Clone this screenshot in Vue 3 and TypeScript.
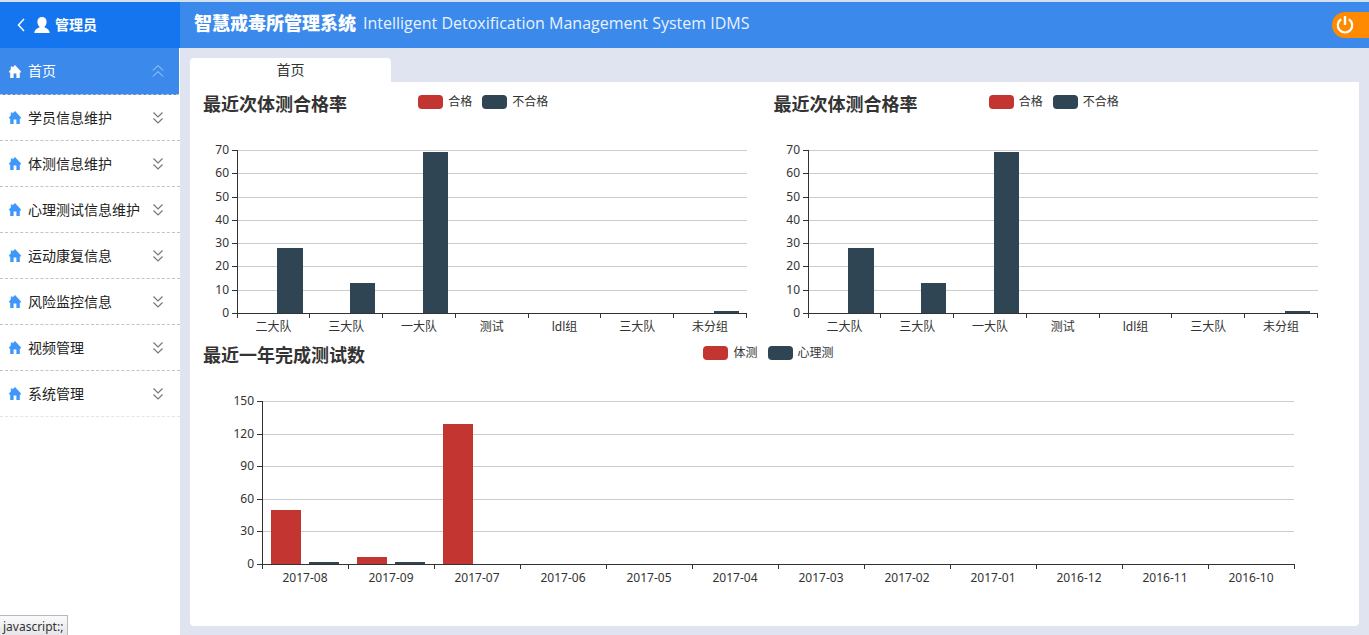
<script setup lang="ts">
import { ref } from 'vue'

interface Series { name: string; color: string; values: number[] }
interface Chart {
  id: string
  title: string
  wide: boolean
  max: number
  step: number
  categories: string[]
  series: Series[]
}

const RED = '#c23531'
const NAVY = '#2f4554'
const PLOT_HEIGHT = 163

const menu: string[] = [
  '首页', '学员信息维护', '体测信息维护', '心理测试信息维护',
  '运动康复信息', '风险监控信息', '视频管理', '系统管理',
]
const active = ref(0)

const teams = ['二大队', '三大队', '一大队', '测试', 'ldl组', '三大队', '未分组']
const passRate = (id: string): Chart => ({
  id,
  title: '最近次体测合格率',
  wide: false,
  max: 70,
  step: 10,
  categories: teams,
  series: [
    { name: '合格', color: RED, values: [0, 0, 0, 0, 0, 0, 0] },
    { name: '不合格', color: NAVY, values: [28, 13, 69, 0, 0, 0, 1] },
  ],
})

const charts: Chart[] = [
  passRate('rate-a'),
  passRate('rate-b'),
  {
    id: 'year',
    title: '最近一年完成测试数',
    wide: true,
    max: 150,
    step: 30,
    categories: [
      '2017-08', '2017-09', '2017-07', '2017-06', '2017-05', '2017-04',
      '2017-03', '2017-02', '2017-01', '2016-12', '2016-11', '2016-10',
    ],
    series: [
      { name: '体测', color: RED, values: [50, 6, 129, 0, 0, 0, 0, 0, 0, 0, 0, 0] },
      { name: '心理测', color: NAVY, values: [2, 2, 0, 0, 0, 0, 0, 0, 0, 0, 0, 0] },
    ],
  },
]

const ticks = (c: Chart): number[] =>
  Array.from({ length: c.max / c.step + 1 }, (_, i) => i * c.step)

const yOf = (c: Chart, v: number): number => Math.round(PLOT_HEIGHT * (1 - v / c.max))

// Two bars share 80% of a category, separated by 30% of a bar's width.
const bars = (c: Chart) => {
  const slot = 100 / c.categories.length
  const width = (slot * 0.8) / 2.3
  return c.series.flatMap((s, k) =>
    s.values
      .map((v, i) => ({
        key: `${k}-${i}`,
        x: `${slot * (i + 0.1) + k * width * 1.3}%`,
        width: `${width}%`,
        y: yOf(c, v),
        height: PLOT_HEIGHT - yOf(c, v),
        color: s.color,
      }))
      .filter((b) => b.height > 0),
  )
}
</script>

<template>
  <div class="app">
    <aside class="sidebar">
      <div class="account">
        <button class="back" type="button" aria-label="返回">
          <svg width="8" height="14" viewBox="0 0 8 14"><path d="M7 1L1.5 7L7 13" fill="none" stroke="#fff" stroke-width="1.5" /></svg>
        </button>
        <svg class="user" width="16" height="16" viewBox="0 0 16 16">
          <path fill="#fff" d="M8 0C5.2 0 3.4 1.9 3.4 4.8C3.4 6.8 4.2 8.6 5.4 9.6V10.6C3 11.4 .6 12.6 .3 16H15.7C15.4 12.6 13 11.4 10.6 10.6V9.6C11.8 8.6 12.6 6.8 12.6 4.8C12.6 1.9 10.8 0 8 0Z" />
        </svg>
        <strong>管理员</strong>
      </div>
      <nav>
        <a
          v-for="(item, i) in menu"
          :key="item"
          href="#"
          class="item"
          :class="{ active: i === active }"
          @click.prevent="active = i"
        >
          <svg class="home" width="12" height="13" viewBox="0 0 12 13">
            <path fill="currentColor" d="M6 0L12 6.6V7.4H10.8V13H7.4V8.6H4.6V13H1.2V7.4H0V6.6L1.8 4.6V1.6H3.6V2.6Z" />
          </svg>
          <span class="label">{{ item }}</span>
          <svg class="arrows" width="12" height="14" viewBox="0 0 12 14">
            <path v-if="i === active" d="M1 6.5L6 1.5L11 6.5M1 12.5L6 7.5L11 12.5" fill="none" stroke="currentColor" />
            <path v-else d="M1.5 1.5L6 6L10.5 1.5M1.5 7.5L6 12L10.5 7.5" fill="none" stroke="currentColor" stroke-width="1.2" />
          </svg>
        </a>
      </nav>
    </aside>

    <div class="content">
      <header class="topbar">
        <h1>智慧戒毒所管理系统</h1>
        <span class="english">Intelligent Detoxification Management System IDMS</span>
        <button class="power" type="button" aria-label="退出">
          <svg width="18" height="20" viewBox="0 0 18 20">
            <path d="M5.2 4.2A7.2 7.2 0 1 0 12.8 4.2" fill="none" stroke="#fff" stroke-width="2.2" />
            <path d="M9 1V10" stroke="#fff" stroke-width="2.4" />
          </svg>
        </button>
      </header>

      <main>
        <div class="tabs"><button type="button" class="tab">首页</button></div>
        <div class="panel">
          <section v-for="c in charts" :key="c.id" class="chart" :class="{ wide: c.wide }">
            <div class="heading">
              <h2>{{ c.title }}</h2>
              <ul class="legend">
                <li v-for="s in c.series" :key="s.name">
                  <span class="swatch" :style="{ background: s.color }"></span>
                  <span class="name">{{ s.name }}</span>
                </li>
              </ul>
            </div>
            <svg class="plot" :height="PLOT_HEIGHT" width="100%" role="img" :aria-label="c.title">
              <g v-for="t in ticks(c)" :key="t">
                <rect v-if="t > 0" x="0" :y="yOf(c, t)" width="100%" height="1" fill="#ccc" />
                <rect x="-5" :y="yOf(c, t)" width="5" height="1" fill="#333" />
                <text x="-8" :y="yOf(c, t) + 4" text-anchor="end">{{ t }}</text>
              </g>
              <rect v-for="b in bars(c)" :key="b.key" :x="b.x" :y="b.y" :width="b.width" :height="b.height" :fill="b.color" />
              <rect x="0" y="0" width="1" :height="PLOT_HEIGHT" fill="#333" />
              <rect x="0" :y="PLOT_HEIGHT" width="100%" height="1" fill="#333" />
              <line
                v-for="n in c.categories.length + 1"
                :key="'tick' + n"
                :x1="`${((n - 1) / c.categories.length) * 100}%`"
                :x2="`${((n - 1) / c.categories.length) * 100}%`"
                :y1="PLOT_HEIGHT"
                :y2="PLOT_HEIGHT + 5"
                stroke="#333"
              />
              <text
                v-for="(name, i) in c.categories"
                :key="'cat' + i"
                :x="`${((i + 0.5) / c.categories.length) * 100}%`"
                :y="PLOT_HEIGHT + 18"
                text-anchor="middle"
              >{{ name }}</text>
            </svg>
          </section>
        </div>
      </main>
    </div>

    <div class="status">javascript:;</div>
  </div>
</template>

<style>
body {
  margin: 0;
}
</style>

<style scoped>
.app {
  display: flex;
  box-sizing: border-box;
  min-height: 100vh;
  border-top: 2px solid #d3e0f0;
  background: #e0e4f0;
  color: #333;
  font-family: "Noto Sans", "Noto Sans CJK SC", sans-serif;
  font-size: 14px;
}
button {
  border: 0;
  padding: 0;
  background: none;
  color: inherit;
  font: inherit;
  cursor: pointer;
}
svg {
  display: block;
}
.sidebar {
  flex: 0 0 180px;
  background: #fff;
}
.account {
  display: flex;
  align-items: center;
  height: 46px;
  padding-left: 17px;
  background: #1475ee;
  color: #fff;
  line-height: 20px;
}
.user {
  margin: 0 5px 0 9px;
}
.item {
  display: flex;
  align-items: center;
  box-sizing: border-box;
  height: 46px;
  padding: 0 16px 0 9px;
  border-bottom: 1px dashed #c4c4c4;
  color: #222;
  line-height: 20px;
  text-decoration: none;
}
.item:last-child {
  border-bottom-color: #e4e4e4;
}
.home {
  margin-right: 7px;
  color: #3f97fb;
}
.label {
  flex: 1;
  white-space: nowrap;
}
.arrows {
  color: #777;
}
.item.active {
  height: 47px;
  margin-right: 1px;
  padding-right: 15px;
  background: #3b89ea;
  color: #fff;
}
.item.active .home {
  color: #fff;
}
.item.active .arrows {
  color: #b5d4fa;
}
.content {
  display: flex;
  flex: 1;
  flex-direction: column;
  min-width: 0;
}
.topbar {
  display: flex;
  align-items: center;
  height: 46px;
  padding-left: 14px;
  background: #3b89ea;
  color: #fff;
}
h1 {
  margin: 0 7px 4px 0;
  font-size: 18px;
  font-weight: 900;
  line-height: 24px;
  white-space: nowrap;
}
.english {
  margin-bottom: 4px;
  color: #e8f2ff;
  font-family: "Open Sans", "Noto Sans", sans-serif;
  font-size: 16px;
  line-height: 24px;
  white-space: nowrap;
}
.power {
  display: flex;
  align-items: center;
  width: 37px;
  height: 26px;
  margin-left: auto;
  padding-left: 4px;
  border-radius: 13px 0 0 13px;
  background: #ff8a00;
}
main {
  display: flex;
  flex: 1;
  flex-direction: column;
  padding: 10px 10px 9px;
}
.tab {
  width: 201px;
  height: 24px;
  border-radius: 4px 4px 0 0;
  background: #fff;
  line-height: 24px;
}
.panel {
  display: grid;
  flex: 1;
  grid-template-columns: 1fr 1fr;
  align-content: start;
  padding: 8px 20px 8px 8px;
  border-radius: 0 0 4px 4px;
  background: #fff;
}
.chart {
  padding: 0 22px 28px 39px;
}
.chart.wide {
  grid-column: 1 / -1;
  padding: 0 45px 28px 64px;
}
.heading {
  display: grid;
  height: 60px;
  margin: 0 -22px 0 -39px;
}
.wide .heading {
  margin: 0 -45px 0 -64px;
}
h2,
.legend {
  grid-area: 1 / 1;
  margin: 0;
}
h2 {
  padding: 2px 5px;
  font-size: 18px;
  font-weight: 700;
  line-height: 24px;
}
.legend {
  display: flex;
  gap: 10px;
  justify-content: center;
  align-items: flex-start;
  padding: 5px 0 0;
  list-style: none;
}
.legend li {
  display: flex;
  gap: 5px;
  font-size: 12px;
  line-height: 14px;
}
.swatch {
  width: 25px;
  height: 14px;
  border-radius: 4px;
}
.plot {
  overflow: visible;
  shape-rendering: crispEdges;
}
.plot text {
  fill: #333;
  font-size: 12px;
}
.status {
  position: fixed;
  bottom: 0;
  left: 0;
  box-sizing: border-box;
  height: 20px;
  padding: 0 4px 0 3px;
  border: 1px solid #b8b8b8;
  border-width: 1px 1px 0 0;
  background: linear-gradient(#fafafc, #e6e6ea);
  font-size: 12px;
  line-height: 22px;
}
</style>
